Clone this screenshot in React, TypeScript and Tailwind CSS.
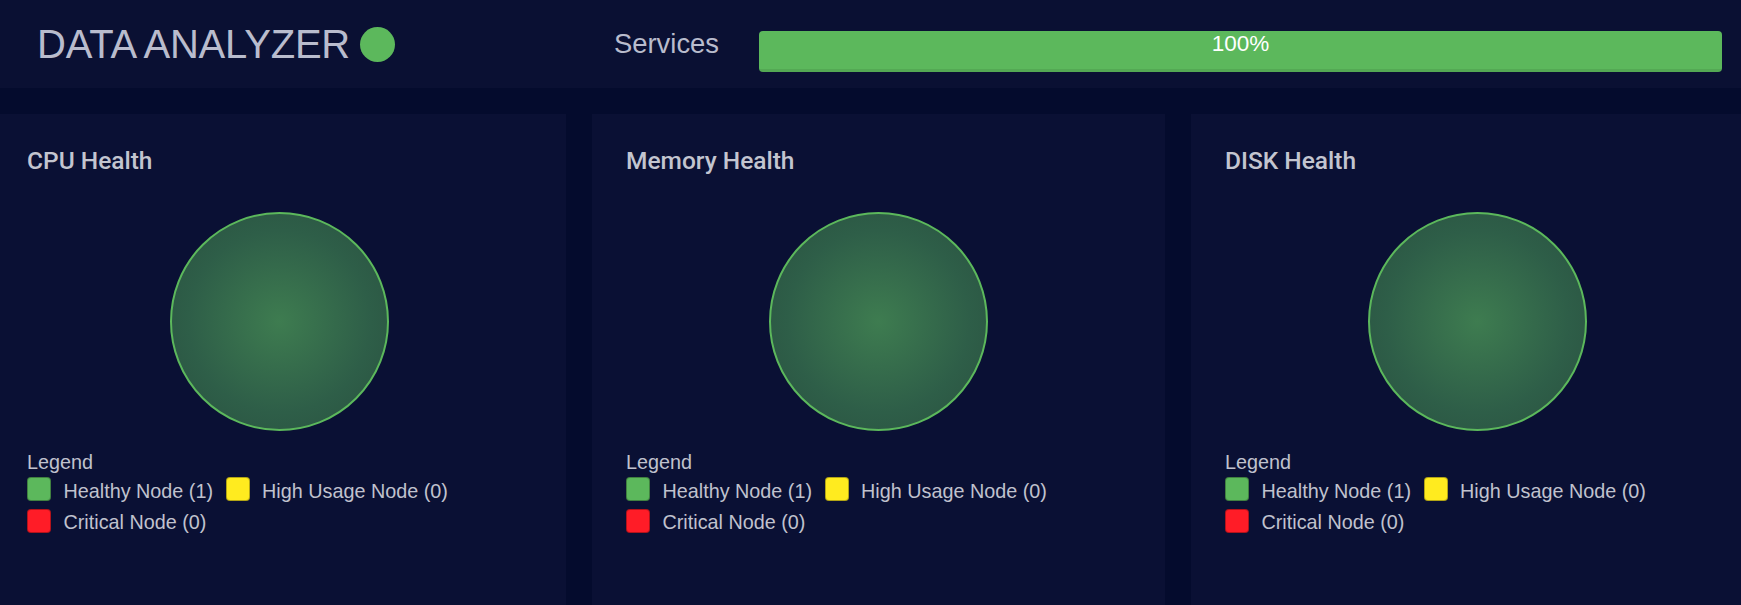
import React from 'react';

type Card = { title: string; healthy: number; high: number; critical: number };

const cards: Card[] = [
  { title: 'CPU Health', healthy: 1, high: 0, critical: 0 },
  { title: 'Memory Health', healthy: 1, high: 0, critical: 0 },
  { title: 'DISK Health', healthy: 1, high: 0, critical: 0 },
];

function LegendItem({ color, label }: { color: string; label: string }) {
  return (
    <div className="flex items-start">
      <span className={`block h-[24px] w-[24px] rounded-[4px] border border-black/30 ${color}`} />
      <span className="ml-[12.5px] mt-[2.5px] leading-[22px]">{label}</span>
    </div>
  );
}

function HealthCard({ card }: { card: Card }) {
  return (
    <div className="h-full bg-[#0a1034] px-[34px] pt-[32px]">
      <h2 className="font-['Roboto',sans-serif] text-[24.5px] font-medium leading-[29px] text-[#c3c5d0]">
        {card.title}
      </h2>
      <div className="mx-auto mt-[37px] h-[219px] w-[219px] rounded-full border-2 border-[#5cb85c] bg-[radial-gradient(circle,#3e7c50_0%,#2e5e48_60%,#29503f_100%)]" />
      <div className="mt-[20px] font-['Liberation_Sans',Arial,sans-serif] text-[19.8px] text-[#c0c2ce]">
        <div className="mb-[4px] leading-[22px]">Legend</div>
        <div className="flex flex-wrap gap-x-[12.5px] gap-y-[7px]">
          <LegendItem color="bg-[#5cb85c]" label={`Healthy Node (${card.healthy})`} />
          <LegendItem color="bg-[#ffeb1f]" label={`High Usage Node (${card.high})`} />
          <LegendItem color="bg-[#ff1c27]" label={`Critical Node (${card.critical})`} />
        </div>
      </div>
    </div>
  );
}

export default function App() {
  return (
    <div className="h-[605px] w-[1741px] overflow-hidden bg-[#040b2d]">
      {/* page is scrolled 7px to the right in the capture */}
      <div className="ml-[-7px] flex h-full w-[1771px] flex-col">
        <header className="flex h-[88px] items-center bg-[#0a1033] pl-[44px] pr-[42px] font-['Liberation_Sans',Arial,sans-serif]">
          <h1 className="flex w-[577px] items-center text-[40px] leading-none tracking-[-0.2px] text-[#b9bccd]">
            DATA ANALYZER
            <span className="ml-[10px] block h-[35px] w-[35px] rounded-full bg-[#5cb85c]" />
          </h1>
          <span className="text-[27.4px] leading-none text-[#b9bccd]">Services</span>
          <div className="ml-[40px] mt-[15px] h-[41px] flex-1 overflow-hidden rounded-[4px] bg-[#f5f5f5]">
            <div className="h-full w-full bg-[#5cb85c] text-center text-[22.5px] leading-[26px] text-white shadow-[inset_0_-3px_0_rgba(0,0,0,0.08)]">
              100%
            </div>
          </div>
        </header>
        <main className="grid flex-1 grid-cols-3 gap-[26px] pt-[26px]">
          {cards.map((card) => (
            <HealthCard card={card} key={card.title} />
          ))}
        </main>
      </div>
    </div>
  );
}
